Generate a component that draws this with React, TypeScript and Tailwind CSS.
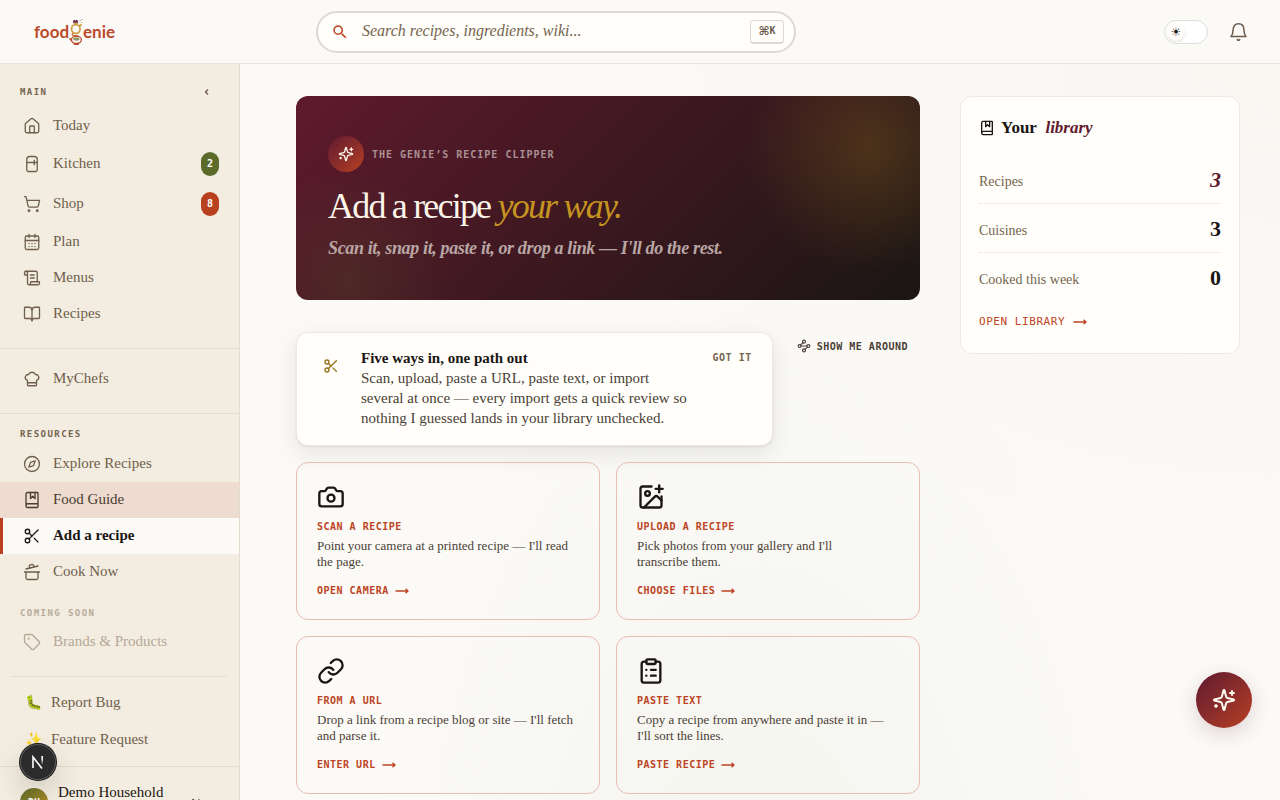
import {
  ArrowUpDown,
  BookMarked,
  BookOpen,
  CalendarDays,
  Camera,
  ChefHat,
  ClipboardList,
  Compass,
  CookingPot,
  House,
  ImagePlus,
  Link,
  Refrigerator,
  Scissors,
  ScrollText,
  ShoppingCart,
  Tag,
  Waypoints,
  type LucideIcon,
} from 'lucide-react';
import { MdSearch } from 'react-icons/md';

const mono = "font-['DejaVu_Sans_Mono',monospace]";

type NavEntry = {
  label: string;
  icon: LucideIcon;
  badge?: string;
  badgeClass?: string;
  state?: 'active' | 'hover' | 'disabled';
};

const mainNav: NavEntry[] = [
  { label: 'Today', icon: House },
  { label: 'Kitchen', icon: Refrigerator, badge: '2', badgeClass: 'bg-[#5c6b2a]' },
  { label: 'Shop', icon: ShoppingCart, badge: '8', badgeClass: 'bg-[#b8401f]' },
  { label: 'Plan', icon: CalendarDays },
  { label: 'Menus', icon: ScrollText },
  { label: 'Recipes', icon: BookOpen },
];

const resourceNav: NavEntry[] = [
  { label: 'Explore Recipes', icon: Compass },
  { label: 'Food Guide', icon: BookMarked, state: 'hover' },
  { label: 'Add a recipe', icon: Scissors, state: 'active' },
  { label: 'Cook Now', icon: CookingPot },
];

const importCards = [
  {
    icon: Camera,
    title: 'SCAN A RECIPE',
    text: "Point your camera at a printed recipe — I'll read the page.",
    action: 'OPEN CAMERA',
  },
  {
    icon: ImagePlus,
    title: 'UPLOAD A RECIPE',
    text: "Pick photos from your gallery and I'll\ntranscribe them.",
    action: 'CHOOSE FILES',
  },
  {
    icon: Link,
    title: 'FROM A URL',
    text: "Drop a link from a recipe blog or site — I'll fetch and parse it.",
    action: 'ENTER URL',
  },
  {
    icon: ClipboardList,
    title: 'PASTE TEXT',
    text: "Copy a recipe from anywhere and paste it in — I'll sort the lines.",
    action: 'PASTE RECIPE',
  },
];

const stats = [
  { label: 'Recipes', value: '3', accent: true },
  { label: 'Cuisines', value: '3' },
  { label: 'Cooked this week', value: '0' },
];

function Arrow() {
  return (
    <svg viewBox="0 0 14 8" className="w-[14px]" fill="none" stroke="currentColor" strokeWidth="1.3" aria-hidden="true">
      <path d="M0.5 4H13M10.5 1.8L13 4L10.5 6.2" />
    </svg>
  );
}

function GenieSparkle({ className }: { className: string }) {
  return (
    <svg
      viewBox="0 0 24 24"
      className={className}
      fill="none"
      stroke="currentColor"
      strokeWidth="2"
      strokeLinecap="round"
      strokeLinejoin="round"
      aria-hidden="true"
    >
      <path d="M9.937 15.5A2 2 0 0 0 8.5 14.063l-6.135-1.582a.5.5 0 0 1 0-.962L8.5 9.936A2 2 0 0 0 9.937 8.5l1.582-6.135a.5.5 0 0 1 .963 0L14.063 8.5A2 2 0 0 0 15.5 9.937l6.135 1.581a.5.5 0 0 1 0 .964L15.5 14.063a2 2 0 0 0-1.437 1.437l-1.582 6.135a.5.5 0 0 1-.963 0z" />
      <path d="M20 3v4M22 5h-4M4 17v2M5 18H3" />
    </svg>
  );
}

function BellIcon() {
  return (
    <svg
      viewBox="0 0 20 20"
      className="size-5"
      fill="none"
      stroke="currentColor"
      strokeWidth="1.5"
      strokeLinecap="round"
      strokeLinejoin="round"
      aria-hidden="true"
    >
      <path d="M3 14.5c1.4-1.4 2-3.2 2-6C5 4.2 7.2 1.8 10.5 1.8S16 4.2 16 8.500c0 2.800.600 4.600 2 6z" />
      <path d="M9.300 17.600c.7.700 1.700.700 2.400 0" />
    </svg>
  );
}

function Logo() {
  return (
    <a
      href="#"
      aria-label="foodgenie"
      className="flex items-center pl-[34px] font-['Lato',sans-serif] text-[17px] leading-6 font-bold text-[#bb4a2c]"
    >
      <span>food</span>
      <svg viewBox="0 0 14 28" className="h-7 w-[14px]" fill="none" aria-hidden="true">
        <path d="M4.2 4.2L5 2.2l1.5.8L8 2.2l1 2z" fill="#6b2a4a" stroke="#6b2a4a" strokeWidth="1" />
        <path d="M4.5 5.8h4.5" stroke="#c9962c" strokeWidth="1.4" />
        <circle cx="6.8" cy="11" r="4.3" stroke="#d0a045" strokeWidth="1.8" />
        <path d="M10 8l2.8-1.4" stroke="#c9962c" strokeWidth="1.6" />
        <path d="M4.2 15.2c-2 1.4-.5 2.4 2 2.5h3" stroke="#c9763c" strokeWidth="1.4" />
        <ellipse cx="7.4" cy="21.8" rx="5" ry="3.7" stroke="#bb4a2c" strokeWidth="1.3" />
        <ellipse cx="7.4" cy="21" rx="3.2" ry="1.7" fill="#8e9b6a" />
        <path d="M2.5 22.5L.5 20.2M4.8 26.3h5" stroke="#bb4a2c" strokeWidth="1.4" />
        <circle cx="11.2" cy="2.5" r=".6" fill="#8a7a90" />
        <circle cx="13" cy="1.2" r=".5" fill="#8a7a90" />
        <circle cx="12.6" cy="4.6" r=".6" fill="#c9962c" />
      </svg>
      <span>enie</span>
    </a>
  );
}

function Header() {
  return (
    <header className="flex h-16 shrink-0 items-center border-b border-[#e7e5e0] bg-[#fbfaf7]">
      <div className="w-60 shrink-0">
        <Logo />
      </div>
      <div className="ml-[76px] flex h-[42px] w-[480px] items-center gap-[13px] rounded-full border-2 border-[#dcdad5] bg-[#fffefa] pr-[10px] pl-[13px]">
        <MdSearch className="size-[18px] shrink-0 text-[#bc4424]" />
        <input
          type="search"
          aria-label="Search"
          placeholder="Search recipes, ingredients, wiki..."
          className="min-w-0 flex-1 bg-transparent pb-[2px] text-[16px] text-[#1a1613] italic outline-none placeholder:text-[#75654f]"
        />
        <kbd
          className={`${mono} flex h-6 w-[34px] items-center justify-center rounded border border-b-2 border-[#dcdad5] text-[10px] leading-none font-bold text-[#6b5b4a]`}
        >
          <span className="font-['DejaVu_Sans',sans-serif] text-[12px]">⌘</span>K
        </kbd>
      </div>
      <div className="ml-auto flex items-center gap-5 pr-8">
        <button
          type="button"
          aria-label="Toggle theme"
          className="flex h-6 w-11 items-center rounded-full border border-[#dedde0] bg-white px-[2px]"
        >
          <span className="flex size-[18px] items-center justify-center rounded-full bg-[#fffefa] font-['DejaVu_Sans',sans-serif] text-[12px] leading-none text-[#1a1613] shadow">
            ☀
          </span>
        </button>
        <button type="button" aria-label="Notifications" className="text-[#6b5b4a]">
          <BellIcon />
        </button>
      </div>
    </header>
  );
}

function NavItem({ label, icon: Icon, badge, badgeClass, state }: NavEntry) {
  const tone =
    state === 'active'
      ? 'border-[#b8401f] bg-[#fbfaf7] font-bold text-[#1a1613]'
      : state === 'hover'
        ? 'border-transparent bg-[#eddccf] text-[#4a3b30]'
        : state === 'disabled'
          ? 'border-transparent text-[#b5a898]'
          : 'border-transparent text-[#6f5f4c]';
  return (
    <a
      href="#"
      className={`flex items-center gap-3 border-l-[3px] pr-5 pl-5 text-[15px] leading-5 ${badge ? 'h-10' : 'h-9'} ${tone}`}
    >
      <Icon size={18} strokeWidth={1.75} className="shrink-0" />
      <span className="flex-1 pb-[2px]">{label}</span>
      {badge && (
        <span
          className={`flex h-6 w-[18px] items-center justify-center rounded-full font-['DejaVu_Sans_Mono',monospace] text-[10px] font-bold text-white ${badgeClass}`}
        >
          {badge}
        </span>
      )}
    </a>
  );
}

function NavLabel({ children, faded = false }: { children: string; faded?: boolean }) {
  return (
    <h2
      className={`${mono} px-5 text-[9px] leading-4 font-bold tracking-[0.16em] ${faded ? 'text-[#b8ab9b]' : 'text-[#75654f]'}`}
    >
      {children}
    </h2>
  );
}

function Sidebar() {
  return (
    <aside className="flex w-60 shrink-0 flex-col overflow-hidden border-r border-[#e2dbd0] bg-[#f3ece0]">
      <nav className="shrink-0 pt-4">
        <div className="mb-1 flex h-6 items-center justify-between pr-7">
          <NavLabel>MAIN</NavLabel>
          <button type="button" aria-label="Collapse sidebar" className="flex h-6 w-2 items-center text-[#6b5b4a]">
            <svg viewBox="0 0 8 8" className="size-2" fill="none" stroke="currentColor" strokeWidth="1.3">
              <path d="M5 1.5L2.5 4L5 6.5" />
            </svg>
          </button>
        </div>
        {mainNav.map((item) => (
          <NavItem key={item.label} {...item} />
        ))}
        <div className="mt-4 border-y border-[#e2dbd0] pt-3 pb-4">
          <NavItem label="MyChefs" icon={ChefHat} />
        </div>
        <div className="pt-3">
          <NavLabel>RESOURCES</NavLabel>
          <div className="pt-1">
            {resourceNav.map((item) => (
              <NavItem key={item.label} {...item} />
            ))}
          </div>
        </div>
        <div className="pt-[15px]">
          <NavLabel faded>COMING SOON</NavLabel>
          <div className="pt-[3px]">
            <NavItem label="Brands & Products" icon={Tag} state="disabled" />
          </div>
        </div>
      </nav>

      <div className="mx-3 mt-4 flex shrink-0 flex-col border-t border-[#e2dbd0] pt-[7px] text-[15px] text-[#6f5f4c]">
        <button type="button" className="flex h-[37px] items-center gap-[9px] pl-3">
          <span className="w-[18px] text-center text-[14px] leading-5">🐛</span>Report Bug
        </button>
        <button type="button" className="flex h-[37px] items-center gap-[9px] pl-3">
          <span className="w-[18px] text-center text-[14px] leading-5">✨</span>Feature Request
        </button>
      </div>

      <div className="mt-2 flex shrink-0 items-start gap-[10px] border-t border-[#e2dbd0] pt-4 pr-9 pl-5">
        <span
          className={`${mono} mt-[5px] flex size-7 items-center justify-center rounded-full bg-linear-135 from-[#5c6b2a] to-[#c4941f] text-[10px] font-bold text-white`}
        >
          DH
        </span>
        <span className="flex-1 text-[15px] leading-[18px] text-[#1a1613]">Demo Household</span>
        <ArrowUpDown size={14} className="mt-[14px] text-[#6b5b4a]" />
      </div>
    </aside>
  );
}

function Hero() {
  return (
    <section className="rounded-xl bg-[radial-gradient(circle_at_92%_25%,rgba(196,148,31,0.22),transparent_125px),radial-gradient(circle_at_8%_90%,rgba(92,107,42,0.18),transparent_110px),linear-gradient(135deg,#5f1a2d,#1a1613)] px-8 py-10">
      <div className="flex items-center gap-2">
        <span className="flex size-9 items-center justify-center rounded-full bg-linear-135 from-[#5f1a2d] to-[#b8401f] text-[#fdf8ee]">
          <GenieSparkle className="size-4" />
        </span>
        <span className={`${mono} text-[10px] font-bold tracking-widest text-[#ab9193]`}>THE GENIE’S RECIPE CLIPPER</span>
      </div>
      <h1 className="mt-3 text-[36px] leading-[44px] font-medium tracking-tighter text-[#fbf5e9]">
        Add a recipe <em className="text-[#c4941f]">your way.</em>
      </h1>
      <p className="mt-2 text-[18px] leading-6 font-bold tracking-[-0.02em] text-[#b9a6a4] italic">
        Scan it, snap it, paste it, or drop a link — I'll do the rest.
      </p>
    </section>
  );
}

function Tip() {
  return (
    <div className="mt-8 flex items-start gap-3">
      <section className="flex min-w-0 flex-1 items-start gap-3 rounded-xl border border-[#ebe9e4] bg-[#fffefa] pt-[15px] pr-5 pb-[17px] pl-4 shadow-[0_8px_24px_rgba(26,22,19,0.09),0_1px_2px_rgba(26,22,19,0.08)]">
        <span className="flex size-9 shrink-0 items-center justify-center text-[#96701a]">
          <Scissors size={16} strokeWidth={2} />
        </span>
        <div className="min-w-0 flex-1 text-[15px] leading-5">
          <h2 className="font-bold text-[#1a1613]">Five ways in, one path out</h2>
          <p className="text-[#4a3f36]">
            Scan, upload, paste a URL, paste text, or import several at once — every import gets a quick review so nothing I
            guessed lands in your library unchecked.
          </p>
        </div>
        <button type="button" className={`${mono} ml-2 text-[10px] leading-5 font-bold tracking-wider text-[#75654f]`}>
          GOT IT
        </button>
      </section>
      <button
        type="button"
        className={`${mono} flex h-7 shrink-0 items-center gap-[6px] px-3 text-[10px] font-bold tracking-wider text-[#4a3f36]`}
      >
        <Waypoints size={14} strokeWidth={2} />
        SHOW ME AROUND
      </button>
    </div>
  );
}

function Library() {
  return (
    <aside className="w-[280px] shrink-0 rounded-xl border border-[#ebe9e4] bg-[#fffefa] px-[18px] pt-5 pb-[23px]">
      <h2 className="flex items-center gap-[6px] text-[17px] leading-[22px] font-bold text-[#1a1613]">
        <BookMarked size={16} strokeWidth={2} />
        <span>
          Your&nbsp; <em className="text-[#5f1a2d]">library</em>
        </span>
      </h2>
      <dl className="mt-4">
        {stats.map((stat) => (
          <div
            key={stat.label}
            className="flex h-[49px] items-center justify-between border-b border-dotted border-[#e6e3dd] last:border-b-0"
          >
            <dt className="pt-1 text-[14px] text-[#75654f]">{stat.label}</dt>
            <dd className={`text-[22px] font-bold ${stat.accent ? 'text-[#5f1a2d] italic' : 'text-[#1a1613]'}`}>{stat.value}</dd>
          </div>
        ))}
      </dl>
      <a href="#" className={`${mono} mt-3 flex items-center gap-2 text-[11px] leading-4 tracking-wider text-[#bc4424]`}>
        OPEN LIBRARY <Arrow />
      </a>
    </aside>
  );
}

export default function App() {
  return (
    <div className="flex h-screen flex-col overflow-hidden bg-[#fbfaf7] font-['Liberation_Serif',serif] text-[#1a1613]">
      <Header />
      <div className="flex min-h-0 flex-1">
        <Sidebar />
        <main className="flex min-w-0 flex-1 items-start gap-10 overflow-hidden bg-[radial-gradient(ellipse_at_100%_0%,rgba(184,64,31,0.025),transparent_50%),radial-gradient(ellipse_at_50%_120%,rgba(92,107,42,0.04),transparent_55%)] pt-8 pr-10 pl-14">
          <div className="min-w-0 flex-1 pb-10">
            <Hero />
            <Tip />
            <div className="mt-4 grid grid-cols-2 gap-4">
              {importCards.map(({ icon: Icon, title, text, action }) => (
                <button
                  key={title}
                  type="button"
                  className="flex h-[158px] flex-col items-start rounded-xl border border-[#e8beb2] px-5 pt-5 text-left"
                >
                  <Icon size={28} strokeWidth={2} />
                  <span className={`${mono} mt-2 text-[10px] leading-4 font-bold tracking-wider text-[#bc4424]`}>{title}</span>
                  <span className="mt-[3px] text-[13px] leading-4 whitespace-pre-line text-[#4a3f36]">{text}</span>
                  <span
                    className={`${mono} mt-[13px] flex items-center gap-[6px] text-[10px] leading-4 font-bold tracking-wider text-[#bc4424]`}
                  >
                    {action} <Arrow />
                  </span>
                </button>
              ))}
            </div>
          </div>
          <Library />
        </main>
      </div>

      <button
        type="button"
        aria-label="Ask the genie"
        className="fixed right-7 bottom-[72px] flex size-14 items-center justify-center rounded-full bg-linear-135 from-[#5f1a2d] to-[#b8401f] text-[#fdf8ee] shadow-[0_6px_20px_rgba(95,26,45,0.18)]"
      >
        <GenieSparkle className="size-6" />
      </button>
      <button
        type="button"
        aria-label="Developer tools"
        className="fixed bottom-5 left-5 flex size-9 items-center justify-center rounded-full bg-[#2b2b2b] shadow-[0_0_0_1px_#171717,inset_0_0_0_1px_#5a5a5a,0_12px_28px_rgba(0,0,0,0.16)]"
      >
        <svg viewBox="0 0 14 14" className="size-[14px]" fill="none" strokeWidth="1.6" aria-hidden="true">
          <defs>
            <linearGradient id="fade" x1="0" y1="0" x2="0" y2="1">
              <stop offset="0.3" stopColor="#fff" />
              <stop offset="1" stopColor="#fff" stopOpacity="0" />
            </linearGradient>
          </defs>
          <path d="M2 13V2L11 13.5" stroke="#fff" />
          <rect x="10.4" y="1" width="1.6" height="9" fill="url(#fade)" />
        </svg>
      </button>
    </div>
  );
}
